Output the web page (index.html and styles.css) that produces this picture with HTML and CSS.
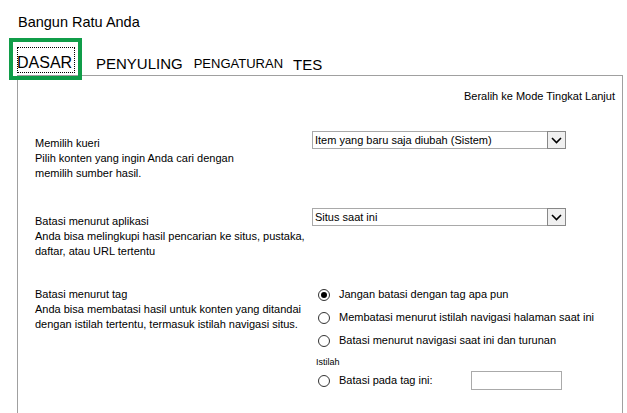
FILE: index.html
```html
<!DOCTYPE html>
<html>
<head>
<meta charset="utf-8">
<link rel="stylesheet" href="styles.css">
</head>
<body>
<div class="page">
  <div class="title">Bangun Ratu Anda</div>
  <div class="tabs">
    <div class="tab-active"><span class="focus">DASAR</span></div>
    <div class="tab tab-pen">PENYULING</div>
    <div class="tab tab-set">PENGATURAN</div>
    <div class="tab tab-tes">TES</div>
  </div>
  <div class="panel">
    <div class="mode-link">Beralih ke Mode Tingkat Lanjut</div>

    <div class="section sec-query">
      <div class="desc desc-query">
        <div>Memilih kueri</div>
        <div>Pilih konten yang ingin Anda cari dengan</div>
        <div>memilih sumber hasil.</div>
      </div>
      <div class="control">
        <div class="select">
          <span class="select-text">Item yang baru saja diubah (Sistem)</span>
          <span class="select-btn"><svg width="11" height="7" viewBox="0 0 11 7"><path d="M1 1 L5.5 5.5 L10 1" fill="none" stroke="#000" stroke-width="1.6"/></svg></span>
        </div>
      </div>
    </div>

    <div class="section sec-app">
      <div class="desc desc-app">
        <div>Batasi menurut aplikasi</div>
        <div>Anda bisa melingkupi hasil pencarian ke situs, pustaka,</div>
        <div>daftar, atau URL tertentu</div>
      </div>
      <div class="control">
        <div class="select">
          <span class="select-text">Situs saat ini</span>
          <span class="select-btn"><svg width="11" height="7" viewBox="0 0 11 7"><path d="M1 1 L5.5 5.5 L10 1" fill="none" stroke="#000" stroke-width="1.6"/></svg></span>
        </div>
      </div>
    </div>

    <div class="section sec-tag">
      <div class="desc">
        <div>Batasi menurut tag</div>
        <div>Anda bisa membatasi hasil untuk konten yang ditandai</div>
        <div>dengan istilah tertentu, termasuk istilah navigasi situs.</div>
      </div>
      <div class="control radios">
        <div class="radio-row"><span class="radio checked"></span><span>Jangan batasi dengan tag apa pun</span></div>
        <div class="radio-row"><span class="radio"></span><span>Membatasi menurut istilah navigasi halaman saat ini</span></div>
        <div class="radio-row"><span class="radio"></span><span>Batasi menurut navigasi saat ini dan turunan</span></div>
        <div class="small-label">Istilah</div>
        <div class="radio-row last"><span class="radio"></span><span class="tag-label">Batasi pada tag ini:</span><span class="textbox"></span></div>
      </div>
    </div>
  </div>
</div>
</body>
</html>
```

FILE: styles.css
```css
html, body {
  margin: 0;
  padding: 0;
  background: #fff;
}
body {
  font-family: "Liberation Sans", Arial, sans-serif;
  color: #000;
  width: 627px;
  height: 413px;
  overflow: hidden;
}
.page {
  padding-top: 13px;
}
.title {
  font-size: 14.5px;
  line-height: 18px;
  padding-left: 18px;
}
.tabs {
  display: flex;
  align-items: flex-end;
  margin-top: 7px;
  margin-left: 9px;
  height: 42px;
}
.tab-active {
  border: 4px solid #109d49;
  width: 65px;
  height: 34px;
  box-sizing: content-box;
  padding: 0;
  position: relative;
  z-index: 2;
}
.focus {
  display: block;
  margin: 5px 0 0 4px;
  width: 58px;
  height: 26px;
  border: 1px dotted #000;
  font-size: 16px;
  line-height: 16px;
  padding-top: 7px;
  box-sizing: border-box;
  text-indent: -1px;
}
.tab {
  line-height: 16px;
  margin-bottom: 8px;
}
.tab-pen {
  font-size: 15px;
  margin-left: 14px;
}
.tab-set {
  font-size: 13px;
  margin-left: 11px;
}
.tab-tes {
  font-size: 15px;
  margin-left: 10px;
  margin-bottom: 7px;
}
.panel {
  margin-left: 17px;
  margin-right: 4px;
  margin-top: -5px;
  border-top: 1px solid #a0a0a0;
  border-left: 1px solid #a0a0a0;
  border-right: 1px solid #a0a0a0;
  height: 340px;
  font-size: 11px;
  line-height: 15px;
  position: relative;
  z-index: 1;
}
.mode-link {
  text-align: right;
  padding-right: 7px;
  margin-top: 13px;
}
.section {
  display: flex;
  align-items: flex-start;
  padding-left: 17px;
}
.desc {
  width: 277px;
  flex: none;
}
.sec-query {
  margin-top: 27px;
}
.desc-query {
  padding-top: 5px;
}
.sec-app {
  margin-top: 27px;
}
.desc-app {
  padding-top: 6px;
}
.sec-tag {
  margin-top: 28px;
}
.select {
  width: 254px;
  height: 18px;
  border: 1px solid #a9a9a9;
  box-sizing: border-box;
  display: flex;
  align-items: center;
  justify-content: space-between;
  position: relative;
}
.select-text {
  padding-left: 2px;
  font-size: 11px;
  line-height: 16px;
}
.select-btn {
  width: 19px;
  height: 18px;
  margin: -1px -1px -1px 0;
  border: 1px solid #888;
  background: #f0f0f0;
  box-sizing: border-box;
  display: flex;
  align-items: center;
  justify-content: center;
}
.radios {
  padding-left: 6px;
}
.radio-row {
  display: flex;
  align-items: center;
  height: 15px;
  margin-bottom: 8px;
}
.radio {
  width: 12px;
  height: 12px;
  border: 1px solid #333;
  border-radius: 50%;
  box-sizing: border-box;
  margin-right: 9px;
  display: flex;
  align-items: center;
  justify-content: center;
  flex: none;
}
.radio.checked::after {
  content: "";
  width: 6px;
  height: 6px;
  border-radius: 50%;
  background: #000;
}
.small-label {
  font-size: 9px;
  line-height: 12px;
  margin-left: -2px;
  margin-top: 3px;
  margin-bottom: 5px;
}
.tag-label {
  width: 132px;
}
.textbox {
  width: 91px;
  height: 19px;
  border: 1px solid #aaa;
  box-sizing: border-box;
  margin-top: -1px;
}
```
